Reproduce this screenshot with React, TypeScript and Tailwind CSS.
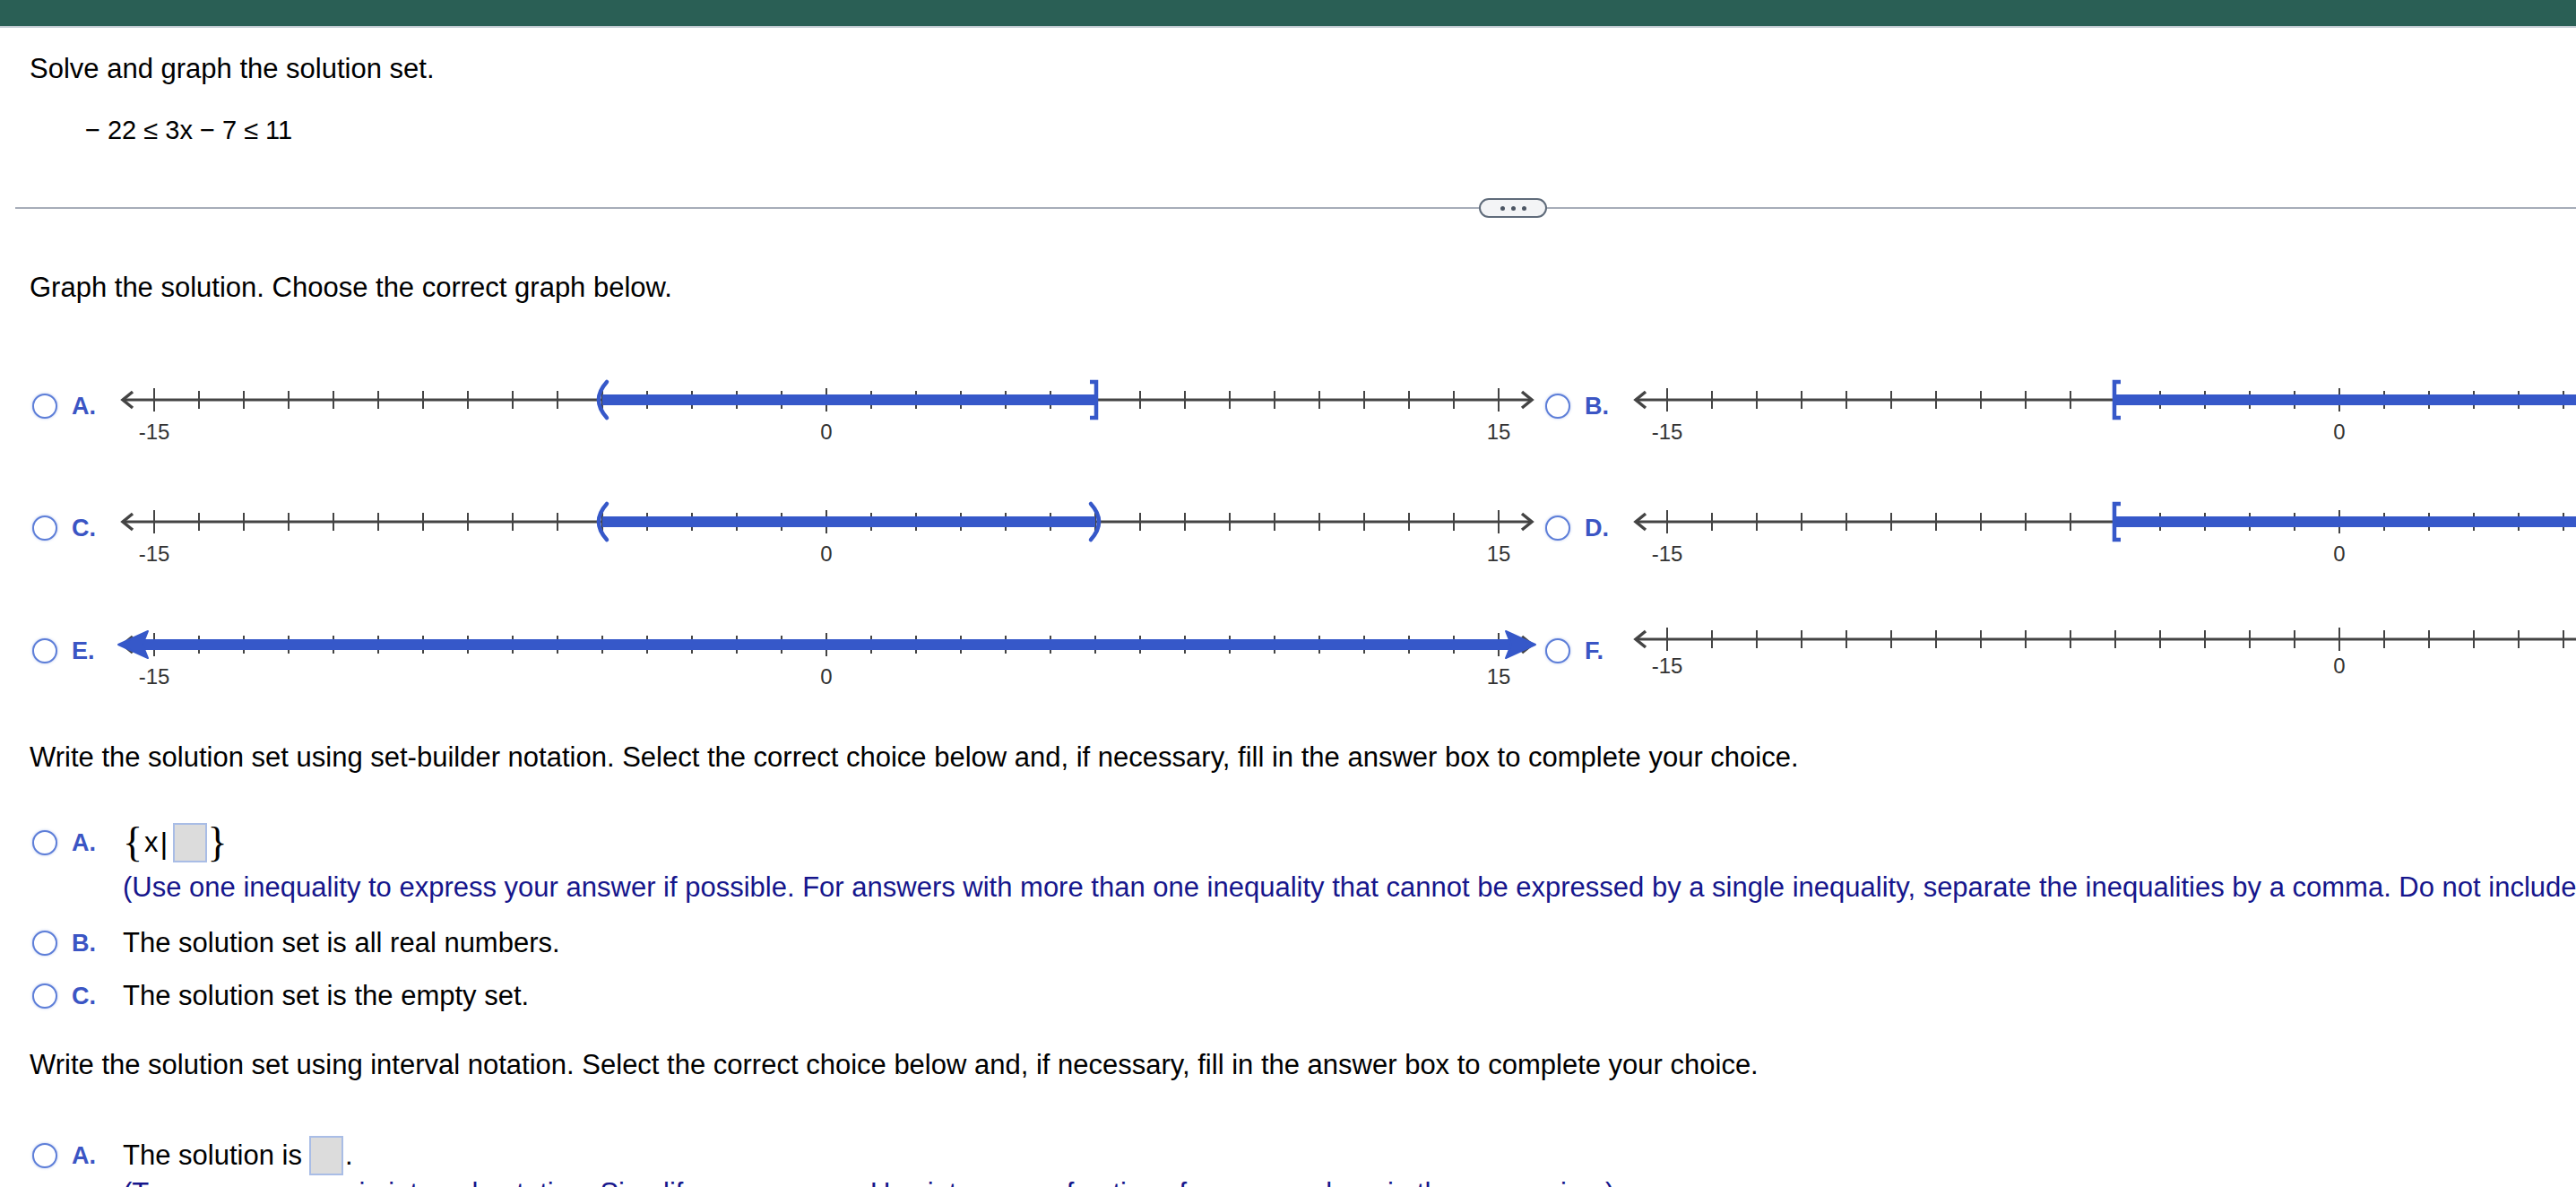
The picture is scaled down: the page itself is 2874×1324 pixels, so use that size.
import React from 'react'

type Kind = 'A' | 'B' | 'C' | 'D' | 'E' | 'F'

const TICK0 = 47
const UNIT = 50
const BLUE = '#3658c9'

function NumberLine({ kind, clipped }: { kind: Kind; clipped?: boolean }) {
  const y = kind === 'F' ? 34 : 40
  const labelY = kind === 'F' ? y + 38 : y + 44
  const ticks = Array.from({ length: 31 }, (_, i) => TICK0 + i * UNIT)
  const lo = TICK0 + 10 * UNIT // -5
  const hi = TICK0 + 21 * UNIT // 6
  const bounded = kind === 'A' || kind === 'B' || kind === 'C' || kind === 'D'

  // the right column runs off the page, its "15" label is never seen
  const labels = [
    { x: TICK0, t: '-15' },
    { x: TICK0 + 15 * UNIT, t: '0' },
    ...(clipped ? [] : [{ x: TICK0 + 30 * UNIT, t: '15' }]),
  ]

  return (
    <svg width={1595} height={100} className="block shrink-0">
      <line x1={12} y1={y} x2={1583} y2={y} stroke="#444" strokeWidth={3} />
      <polyline points={`23,${y - 9} 12,${y} 23,${y + 9}`} fill="none" stroke="#444" strokeWidth={3.5} />
      <polyline points={`1573,${y - 9} 1584,${y} 1573,${y + 9}`} fill="none" stroke="#444" strokeWidth={3.5} />
      {ticks.map((x, i) => {
        const long = i === 0 || i === 15 || i === 30
        const h = long ? 13 : 10
        return <line key={x} x1={x} y1={y - h} x2={x} y2={y + h} stroke="#444" strokeWidth={2} />
      })}
      {bounded && <line x1={lo} y1={y} x2={hi} y2={y} stroke={BLUE} strokeWidth={12} />}
      {(kind === 'A' || kind === 'C') && (
        <path d={`M ${lo + 5} ${y - 20} Q ${lo - 13} ${y} ${lo + 5} ${y + 20}`} fill="none" stroke={BLUE} strokeWidth={4.5} strokeLinecap="round" />
      )}
      {(kind === 'B' || kind === 'D') && (
        <path d={`M ${lo + 6} ${y - 20} H ${lo - 1} V ${y + 20} H ${lo + 6}`} fill="none" stroke={BLUE} strokeWidth={4.5} />
      )}
      {(kind === 'A' || kind === 'B') && (
        <path d={`M ${hi - 6} ${y - 20} H ${hi + 1} V ${y + 20} H ${hi - 6}`} fill="none" stroke={BLUE} strokeWidth={4.5} />
      )}
      {(kind === 'C' || kind === 'D') && (
        <path d={`M ${hi - 5} ${y - 20} Q ${hi + 13} ${y} ${hi - 5} ${y + 20}`} fill="none" stroke={BLUE} strokeWidth={4.5} strokeLinecap="round" />
      )}
      {kind === 'E' && (
        <>
          <line x1={30} y1={y} x2={1566} y2={y} stroke={BLUE} strokeWidth={12} />
          <polygon points={`7,${y} 40,${y - 15} 34,${y} 40,${y + 15}`} fill={BLUE} stroke={BLUE} strokeWidth={2} strokeLinejoin="round" />
          <polygon points={`1588,${y} 1555,${y - 15} 1561,${y} 1555,${y + 15}`} fill={BLUE} stroke={BLUE} strokeWidth={2} strokeLinejoin="round" />
        </>
      )}
      {labels.map((l) => (
        <text
          key={l.t}
          x={l.x}
          y={labelY}
          textAnchor="middle"
          fontSize={24}
          fill="#333"
          fontFamily="'Liberation Sans', Arial, sans-serif"
        >
          {l.t}
        </text>
      ))}
    </svg>
  )
}

function Radio() {
  return (
    <span className="block w-[28px] h-[28px] shrink-0 rounded-full border-[2.5px] border-[#5d7ed8] bg-white shadow-[0_0_3px_rgba(93,126,216,0.45)]" />
  )
}

function GraphChoice({ kind, clipped }: { kind: Kind; clipped?: boolean }) {
  return (
    <div className="flex w-[1684px] shrink-0 items-start">
      <div className="mt-[33px] flex items-center">
        <Radio />
        <span className="ml-[16px] w-[45px] text-[27px] leading-[28px] font-bold text-[#3b55c4]">{kind}.</span>
      </div>
      <NumberLine kind={kind} clipped={clipped} />
    </div>
  )
}

function AnswerBox() {
  return <span className="inline-block w-[38px] h-[44px] bg-[#dcdcdc] border-2 border-[#a9bde6]" />
}

function Choice({ letter, children }: { letter: string; children: React.ReactNode }) {
  return (
    <div className="flex items-center pl-[36px]">
      <Radio />
      <span className="ml-[16px] w-[57px] text-[27px] leading-[28px] font-bold text-[#3b55c4]">{letter}.</span>
      {children}
    </div>
  )
}

export default function App() {
  return (
    <div className="relative h-[1324px] w-[2874px] overflow-hidden bg-white font-['Liberation_Sans',Arial,sans-serif] text-[31px] leading-[36px] text-black">
      <div className="h-[31px] bg-[#2a5f55] border-b-2 border-[#c3ccd3]" />

      <div className="mt-[28px] pl-[33px]">Solve and graph the solution set.</div>
      <div className="mt-[34px] pl-[95px] text-[29px] leading-[32px]">− 22 ≤ 3x − 7 ≤ 11</div>

      <div className="relative mt-[70px] ml-[17px] h-[2px] bg-[#a6adb8]">
        <div className="absolute left-[1633px] top-[-10px] flex h-[22px] w-[76px] items-center justify-center gap-[7px] rounded-full border-2 border-[#5f6b7a] bg-[#f3f4f6]">
          <span className="h-[5px] w-[5px] rounded-full bg-[#4b5563]" />
          <span className="h-[5px] w-[5px] rounded-full bg-[#4b5563]" />
          <span className="h-[5px] w-[5px] rounded-full bg-[#4b5563]" />
        </div>
      </div>

      <div className="mt-[70px] pl-[33px]">Graph the solution. Choose the correct graph below.</div>

      {/* number line choices */}
      <div className="mt-[67px] flex gap-[4px] pl-[36px]">
        <GraphChoice kind="A" />
        <GraphChoice kind="B" clipped />
      </div>
      <div className="mt-[36px] flex gap-[4px] pl-[36px]">
        <GraphChoice kind="C" />
        <GraphChoice kind="D" clipped />
      </div>
      <div className="mt-[37px] flex gap-[4px] pl-[36px]">
        <GraphChoice kind="E" />
        <GraphChoice kind="F" clipped />
      </div>

      <div className="mt-[48px] pl-[33px]">
        Write the solution set using set-builder notation. Select the correct choice below and, if necessary, fill in the answer box to complete your choice.
      </div>

      <div className="mt-[53px] h-[48px]">
        <Choice letter="A">
          <span className="flex items-center">
            <span className="text-[46px] leading-[48px] font-['Liberation_Serif',serif]">{'{'}</span>
            <span className="ml-[2px]">x</span>
            <span className="ml-[2px] text-[34px]">|</span>
            <span className="ml-[6px] flex items-center">
              <AnswerBox />
            </span>
            <span className="text-[46px] leading-[48px] font-['Liberation_Serif',serif]">{'}'}</span>
          </span>
        </Choice>
      </div>
      <div className="mt-[8px] whitespace-nowrap pl-[137px] text-[#16168c]">
        (Use one inequality to express your answer if possible. For answers with more than one inequality that cannot be expressed by a single inequality, separate the inequalities by a comma. Do not include
      </div>

      <div className="mt-[26px]">
        <Choice letter="B">
          <span>The solution set is all real numbers.</span>
        </Choice>
      </div>
      <div className="mt-[23px]">
        <Choice letter="C">
          <span>The solution set is the empty set.</span>
        </Choice>
      </div>

      <div className="mt-[41px] pl-[33px]">
        Write the solution set using interval notation. Select the correct choice below and, if necessary, fill in the answer box to complete your choice.
      </div>

      <div className="mt-[61px] h-[46px]">
        <Choice letter="A">
          <span className="flex items-center">
            <span>The solution is</span>
            <span className="ml-[8px] flex items-center">
              <AnswerBox />
            </span>
            <span className="ml-[2px]">.</span>
          </span>
        </Choice>
      </div>
      <div className="whitespace-nowrap pl-[137px] text-[#16168c]">
        (Type your answer in interval notation. Simplify your answer. Use integers or fractions for any numbers in the expression.)
      </div>
    </div>
  )
}
